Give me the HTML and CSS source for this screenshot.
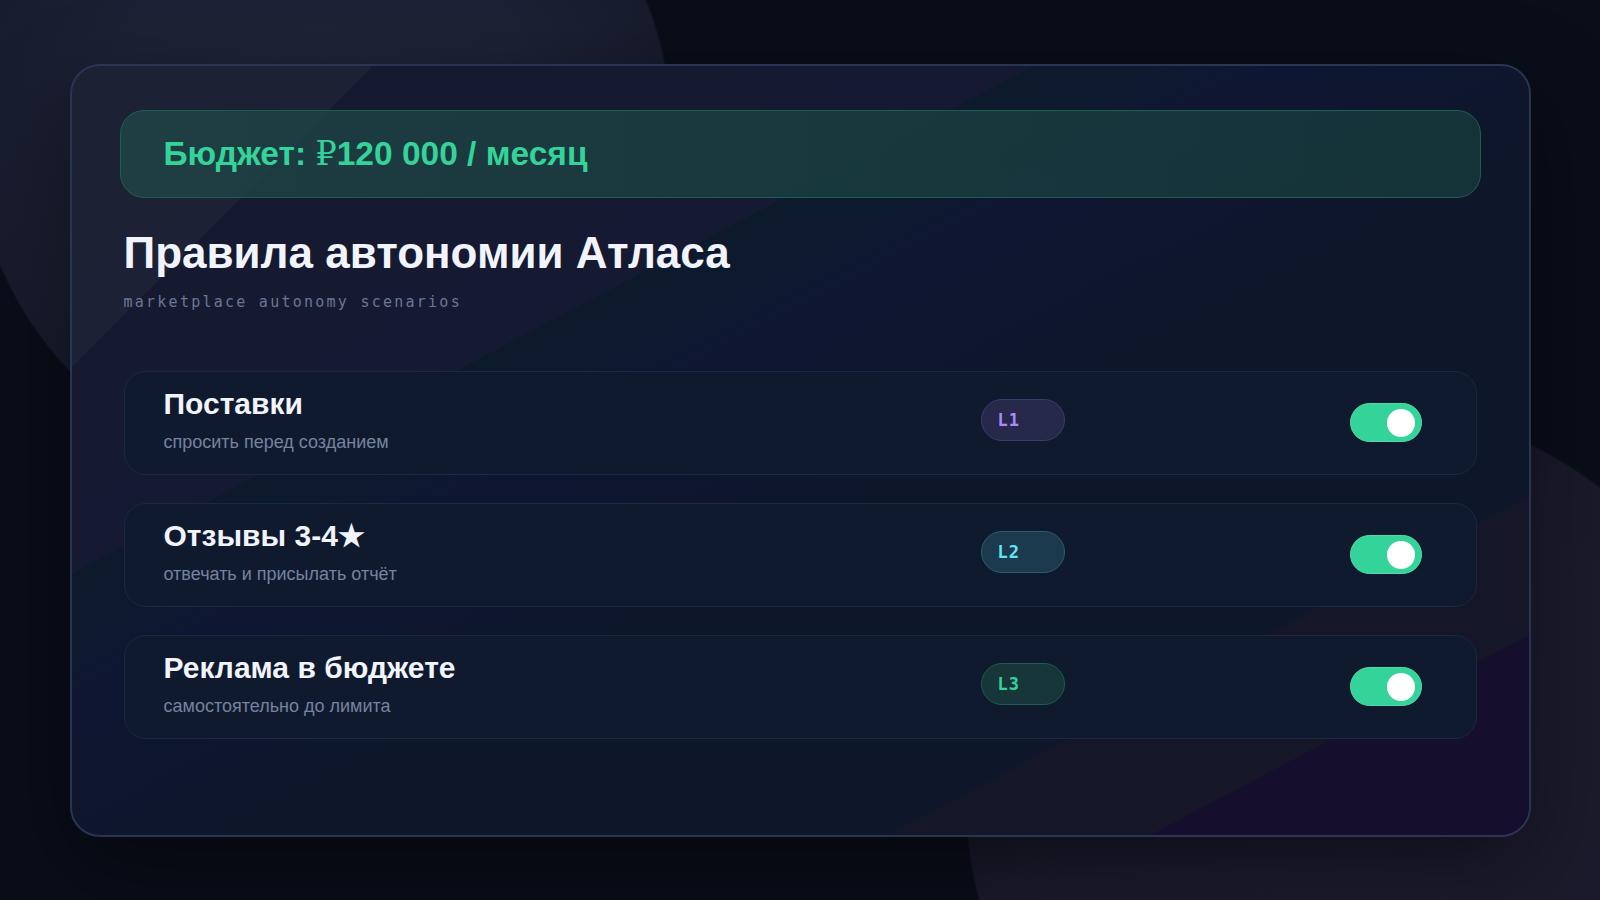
FILE: index.html
```html
<!DOCTYPE html>
<html lang="ru">
<head>
<meta charset="utf-8">
<title>Правила автономии Атласа</title>
<link rel="stylesheet" href="styles.css">
</head>
<body>
<main class="card">
  <div class="budget">Бюджет: <span class="rub">₽</span>120 000 / месяц</div>
  <h1 class="title">Правила автономии Атласа</h1>
  <p class="subtitle">marketplace autonomy scenarios</p>
  <ul class="rules">
    <li class="rule">
      <div class="rule__text">
        <div class="rule__name">Поставки</div>
        <div class="rule__desc">спросить перед созданием</div>
      </div>
      <span class="badge badge--l1">L1</span>
      <span class="toggle"><span class="toggle__knob"></span></span>
    </li>
    <li class="rule">
      <div class="rule__text">
        <div class="rule__name">Отзывы 3-4★</div>
        <div class="rule__desc">отвечать и присылать отчёт</div>
      </div>
      <span class="badge badge--l2">L2</span>
      <span class="toggle"><span class="toggle__knob"></span></span>
    </li>
    <li class="rule">
      <div class="rule__text">
        <div class="rule__name">Реклама в бюджете</div>
        <div class="rule__desc">самостоятельно до лимита</div>
      </div>
      <span class="badge badge--l3">L3</span>
      <span class="toggle"><span class="toggle__knob"></span></span>
    </li>
  </ul>
</main>
</body>
</html>
```

FILE: styles.css
```css
* { box-sizing: border-box; }

html, body {
  margin: 0;
  height: 100%;
}

body {
  overflow: hidden;
  background:
    radial-gradient(circle 350px at 322px 130px, #1f2539 0%, #1c2235 60%, #171c2e 99.4%, rgba(23, 28, 46, 0) 100%),
    radial-gradient(circle 395px at 1360px 800px, #1c1c2e 0%, #1b1b2d 70%, #1a1a2b 99.4%, rgba(26, 26, 43, 0) 100%),
    #0a0e19;
  font-family: "Liberation Sans", Arial, sans-serif;
  display: flex;
  align-items: center;
  justify-content: center;
}

.card {
  width: 1461px;
  padding: 44px 48px 96px;
  border: 2px solid #2a3453;
  border-radius: 30px;
  background:
    linear-gradient(135deg, rgba(38, 42, 58, 0.45) 0 13.5%, transparent 13.5%),
    linear-gradient(to bottom right,
      #161a30 0%, #151a32 33%,
      #0c1a2c 33%, #0d1a2e 37%,
      #0f1632 41%, #0e1629 58%,
      #0e1629 78%, #151628 78%,
      #151628 87%, #150e2c 87%, #150e2c 100%);
  box-shadow: 0 30px 90px rgba(0, 0, 0, 0.45);
}

.budget {
  height: 88px;
  display: flex;
  align-items: center;
  padding: 0 43px;
  border: 1.5px solid #1f5d4e;
  border-radius: 24px;
  background: linear-gradient(90deg, rgba(32, 72, 72, 0.75), rgba(22, 58, 60, 0.8));
  color: #34d399;
  font-size: 33.5px;
  font-weight: 700;
  white-space: pre;
}

.rub {
  font-family: "DejaVu Serif", "Liberation Serif", serif;
  font-weight: 400;
}

.title {
  margin: 28px 0 0 4px;
  color: #f1f4fc;
  font-size: 44px;
  line-height: 53px;
  font-weight: 700;
}

.subtitle {
  margin: 13px 0 0 4px;
  color: #6b7794;
  font-family: "DejaVu Sans Mono", "Liberation Mono", monospace;
  font-size: 15px;
  line-height: 20px;
  letter-spacing: 2.25px;
}

.rules {
  list-style: none;
  margin: 59px 4px 0;
  padding: 0;
  display: flex;
  flex-direction: column;
  gap: 28px;
}

.rule {
  height: 104px;
  display: grid;
  grid-template-columns: 1fr 84px 72px;
  column-gap: 285px;
  align-items: center;
  padding: 0 54px 0 39px;
  border: 1.5px solid #1c2741;
  border-radius: 22px;
  background: #0f1a2e;
}

.rule__text {
  padding-bottom: 6px;
}

.rule__name {
  color: #f1f4fc;
  font-size: 30px;
  line-height: 36px;
  font-weight: 700;
}

.rule__desc {
  margin-top: 9px;
  color: #76829e;
  font-size: 18px;
  line-height: 22px;
}

.badge {
  height: 42px;
  margin-bottom: 6px;
  display: flex;
  align-items: center;
  padding-left: 16px;
  border: 1.5px solid;
  border-radius: 21px;
  font-family: "DejaVu Sans Mono", "Liberation Mono", monospace;
  font-size: 17px;
  font-weight: 700;
  letter-spacing: 1px;
}

.badge--l1 {
  background: #27294b;
  border-color: #3d3a6c;
  color: #a78bfa;
}

.badge--l2 {
  background: #1b3a4e;
  border-color: #2a5d6b;
  color: #67e1f5;
}

.badge--l3 {
  background: #17363a;
  border-color: #1e5b4c;
  color: #34d399;
}

.toggle {
  width: 72px;
  height: 39px;
  display: flex;
  align-items: center;
  justify-content: flex-end;
  padding-right: 6px;
  border: 1px solid #4fdcaa;
  border-radius: 20px;
  background: #34d399;
}

.toggle__knob {
  width: 28px;
  height: 28px;
  border-radius: 50%;
  background: #ffffff;
}
```
